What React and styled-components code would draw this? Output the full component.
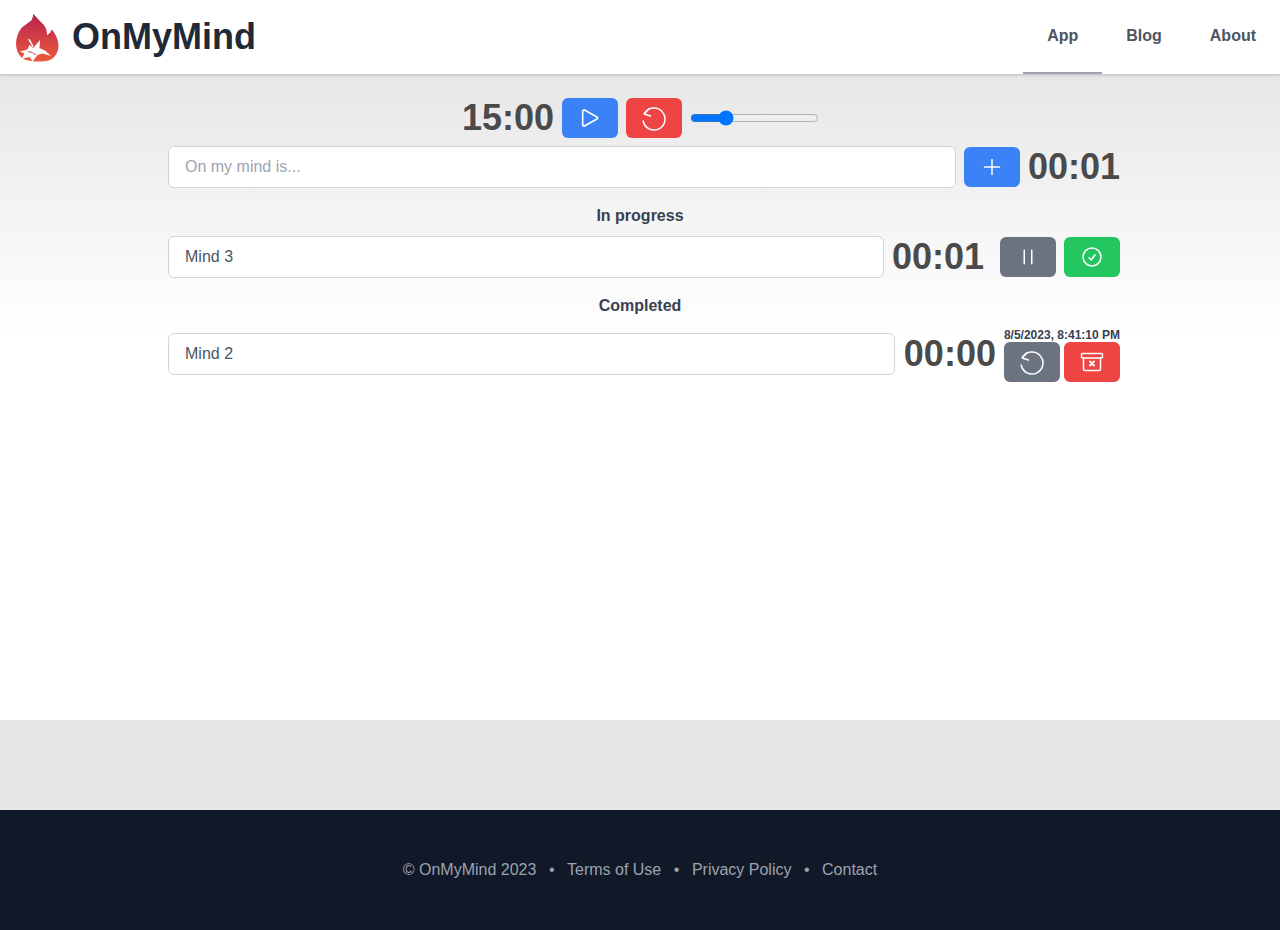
import React from "react";
import styled, { createGlobalStyle } from "styled-components";
import { HiOutlinePlay, HiOutlinePlus, HiOutlinePause, HiOutlineCheckCircle } from "react-icons/hi2";

const Global = createGlobalStyle`
  html, body { margin: 0; padding: 0; background: #fff; }
  body { font-family: "Liberation Sans", Arial, sans-serif; }
  * { box-sizing: border-box; }
`;

const Page = styled.div`
  display: flex;
  flex-direction: column;
  height: 930px;
`;
const Header = styled.header`
  height: 74px;
  flex: none;
  background: #fff;
  display: flex;
  justify-content: space-between;
  align-items: stretch;
  box-shadow: 0 1px 3px rgba(0,0,0,.2);
  position: relative;
  z-index: 1;
`;
const Brand = styled.div`
  display: flex;
  align-items: center;
  padding-left: 16px;
  gap: 12px;
`;
const BrandName = styled.span`
  font-size: 36px;
  font-weight: 700;
  color: #1f2937;
`;
const Nav = styled.nav`
  display: flex;
`;
const NavLink = styled.a`
  display: flex;
  align-items: center;
  padding: 0 24px;
  font-size: 16px;
  font-weight: 700;
  color: #4b5563;
  border-bottom: 2px solid ${p => (p.$active ? "#9ca3af" : "transparent")};
`;
const Main = styled.main`
  height: 646px;
  flex: none;
  background: linear-gradient(to bottom, #e7e7e7 0, #ffffff 260px);
  padding-top: 24px;
`;
const Container = styled.div`
  width: 960px;
  margin: 0 auto;
`;
const TimerRow = styled.div`
  display: flex;
  justify-content: center;
  align-items: center;
  gap: 8px;
  height: 40px;
  padding-left: 1px;
`;
const Clock = styled.span`
  font-size: 36px;
  font-weight: 700;
  color: #4a4a4a;
  line-height: 40px;
  flex: none;
  margin-left: ${p => p.$left || 0}px;
`;
const IconButton = styled.button`
  width: 56px;
  height: 40px;
  flex: none;
  border: 0;
  border-radius: 6px;
  padding: 0;
  color: #fff;
  display: flex;
  align-items: center;
  justify-content: center;
  background: ${p => p.$bg};
`;
const Range = styled.input`
  width: 129px;
  height: 16px;
  margin: 0;
`;
const Row = styled.div`
  display: flex;
  align-items: center;
  gap: 8px;
  padding-left: 8px;
  margin-top: 8px;
`;
const TextField = styled.input`
  flex: 1;
  min-width: 0;
  height: 42px;
  border: 1px solid #d1d5db;
  border-radius: 6px;
  background: #fff;
  padding: 0 16px;
  font: 16px "Liberation Sans", Arial, sans-serif;
  color: #4b5563;
  &::placeholder { color: #9ca3af; opacity: 1; }
`;
const SectionTitle = styled.h2`
  margin: 16px 0 0;
  text-align: center;
  font-size: 16px;
  line-height: 24px;
  font-weight: 700;
  color: #374151;
`;
const Actions = styled.div`
  display: flex;
  gap: ${p => p.$gap}px;
  margin-left: ${p => p.$left || 0}px;
`;
const Stamped = styled.div`
  display: flex;
  flex-direction: column;
  align-items: flex-end;
  height: 56px;
  justify-content: flex-end;
`;
const Stamp = styled.div`
  font-size: 12px;
  line-height: 14px;
  font-weight: 700;
  color: #374151;
  white-space: nowrap;
`;
const Band = styled.div`
  height: 90px;
  flex: none;
  background: #e7e7e7;
`;
const Footer = styled.footer`
  flex: 1;
  background: #111827;
  color: #9ca3af;
  display: flex;
  justify-content: center;
  align-items: center;
  gap: 12.5px;
  font-size: 16px;
`;

const ResetIcon = () => (
  <svg width="28" height="28" viewBox="0 0 28 28" fill="none" stroke="currentColor" strokeWidth="1.5" strokeLinecap="round" strokeLinejoin="round" aria-hidden="true">
    <path d="M4.5 9.5 A11 11 0 1 1 3.2 17" />
    <path d="M9 4.8 L4.2 10 L10.5 12" />
  </svg>
);

const ArchiveXIcon = () => (
  <svg width="24" height="24" viewBox="0 0 24 24" fill="none" stroke="currentColor" strokeWidth="1.5" strokeLinecap="round" strokeLinejoin="round" aria-hidden="true">
    <rect x="1.5" y="3.5" width="21" height="4.5" rx="1" />
    <path d="M3.5 8 V19 a1.5 1.5 0 0 0 1.5 1.5 H19 a1.5 1.5 0 0 0 1.5 -1.5 V8" />
    <path d="M10 11.5 L14 15.5 M14 11.5 L10 15.5" strokeWidth="1.9" />
  </svg>
);

const Logo = () => (
  <svg width="44" height="50" viewBox="0 0 44 50" aria-hidden="true">
    <defs>
      <linearGradient id="flame" x1="0" y1="0" x2="0" y2="1">
        <stop offset="0" stopColor="#b8224f" />
        <stop offset="1" stopColor="#ea5a3c" />
      </linearGradient>
    </defs>
    <path fill="url(#flame)" d="M17.3 1.3 C19 5 25 9 29 14.7 C30.5 17 31 20 31 23 C33.5 22 35 20 35.7 17.3 C39 21 41.5 26 42.3 31.3 C42.8 35 42.3 38.5 40.7 41.3 C39 44.5 37 46.5 34 48 C31 49.3 26 49.5 22 49.5 C15 49.5 9 48.5 5 45 C1.5 41.5 0 36.5 0 31.3 C0.2 26 2 21.5 4 18 C7 13.5 12 11.5 15.7 8 C16.8 6 17.2 3.5 17.3 1.3 Z" />
    <path fill="#fff" d="M13.5 33 L17.3 36 L24 28 L23.5 36 L29 38.5 L35 44 L26.5 41.5 L21.5 43 L16.7 49.5 L13.5 45 L5.7 46.8 L8.5 41.5 L3.8 39.5 L11.5 37.5 Z" />
    <path fill="#fff" d="M11.8 26.8 L14 27.5 L17.8 34.5 L16.5 35 Z" />
    <path d="M12 39.5 L16.5 40.5 L20 43" fill="none" stroke="#d14a44" strokeWidth="1" />
  </svg>
);

export default function App() {
  return (
    <Page>
      <Global />
      <Header>
        <Brand>
          <Logo />
          <BrandName>OnMyMind</BrandName>
        </Brand>
        <Nav>
          <NavLink $active>App</NavLink>
          <NavLink>Blog</NavLink>
          <NavLink>About</NavLink>
        </Nav>
      </Header>
      <Main>
        <Container>
          <TimerRow>
            <Clock>15:00</Clock>
            <IconButton $bg="#3b82f6"><HiOutlinePlay size={26} /></IconButton>
            <IconButton $bg="#ef4444"><ResetIcon /></IconButton>
            <Range type="range" min="0" max="60" defaultValue="15" />
          </TimerRow>
          <Row>
            <TextField placeholder="On my mind is..." />
            <IconButton $bg="#3b82f6"><HiOutlinePlus size={24} /></IconButton>
            <Clock>00:01</Clock>
          </Row>
          <SectionTitle>In progress</SectionTitle>
          <Row>
            <TextField defaultValue="Mind 3" />
            <Clock>00:01</Clock>
            <Actions $gap={8} $left={8}>
              <IconButton $bg="#6b7280"><HiOutlinePause size={24} /></IconButton>
              <IconButton $bg="#22c55e"><HiOutlineCheckCircle size={24} /></IconButton>
            </Actions>
          </Row>
          <SectionTitle>Completed</SectionTitle>
          <Row>
            <TextField defaultValue="Mind 2" />
            <Clock $left={1}>00:00</Clock>
            <Stamped>
              <Stamp>8/5/2023, 8:41:10 PM</Stamp>
              <Actions $gap={4}>
                <IconButton $bg="#6b7280"><ResetIcon /></IconButton>
                <IconButton $bg="#ef4444"><ArchiveXIcon /></IconButton>
              </Actions>
            </Stamped>
          </Row>
        </Container>
      </Main>
      <Band />
      <Footer>
        <span>© OnMyMind 2023</span>
        <span>•</span>
        <span>Terms of Use</span>
        <span>•</span>
        <span>Privacy Policy</span>
        <span>•</span>
        <span>Contact</span>
      </Footer>
    </Page>
  );
}
